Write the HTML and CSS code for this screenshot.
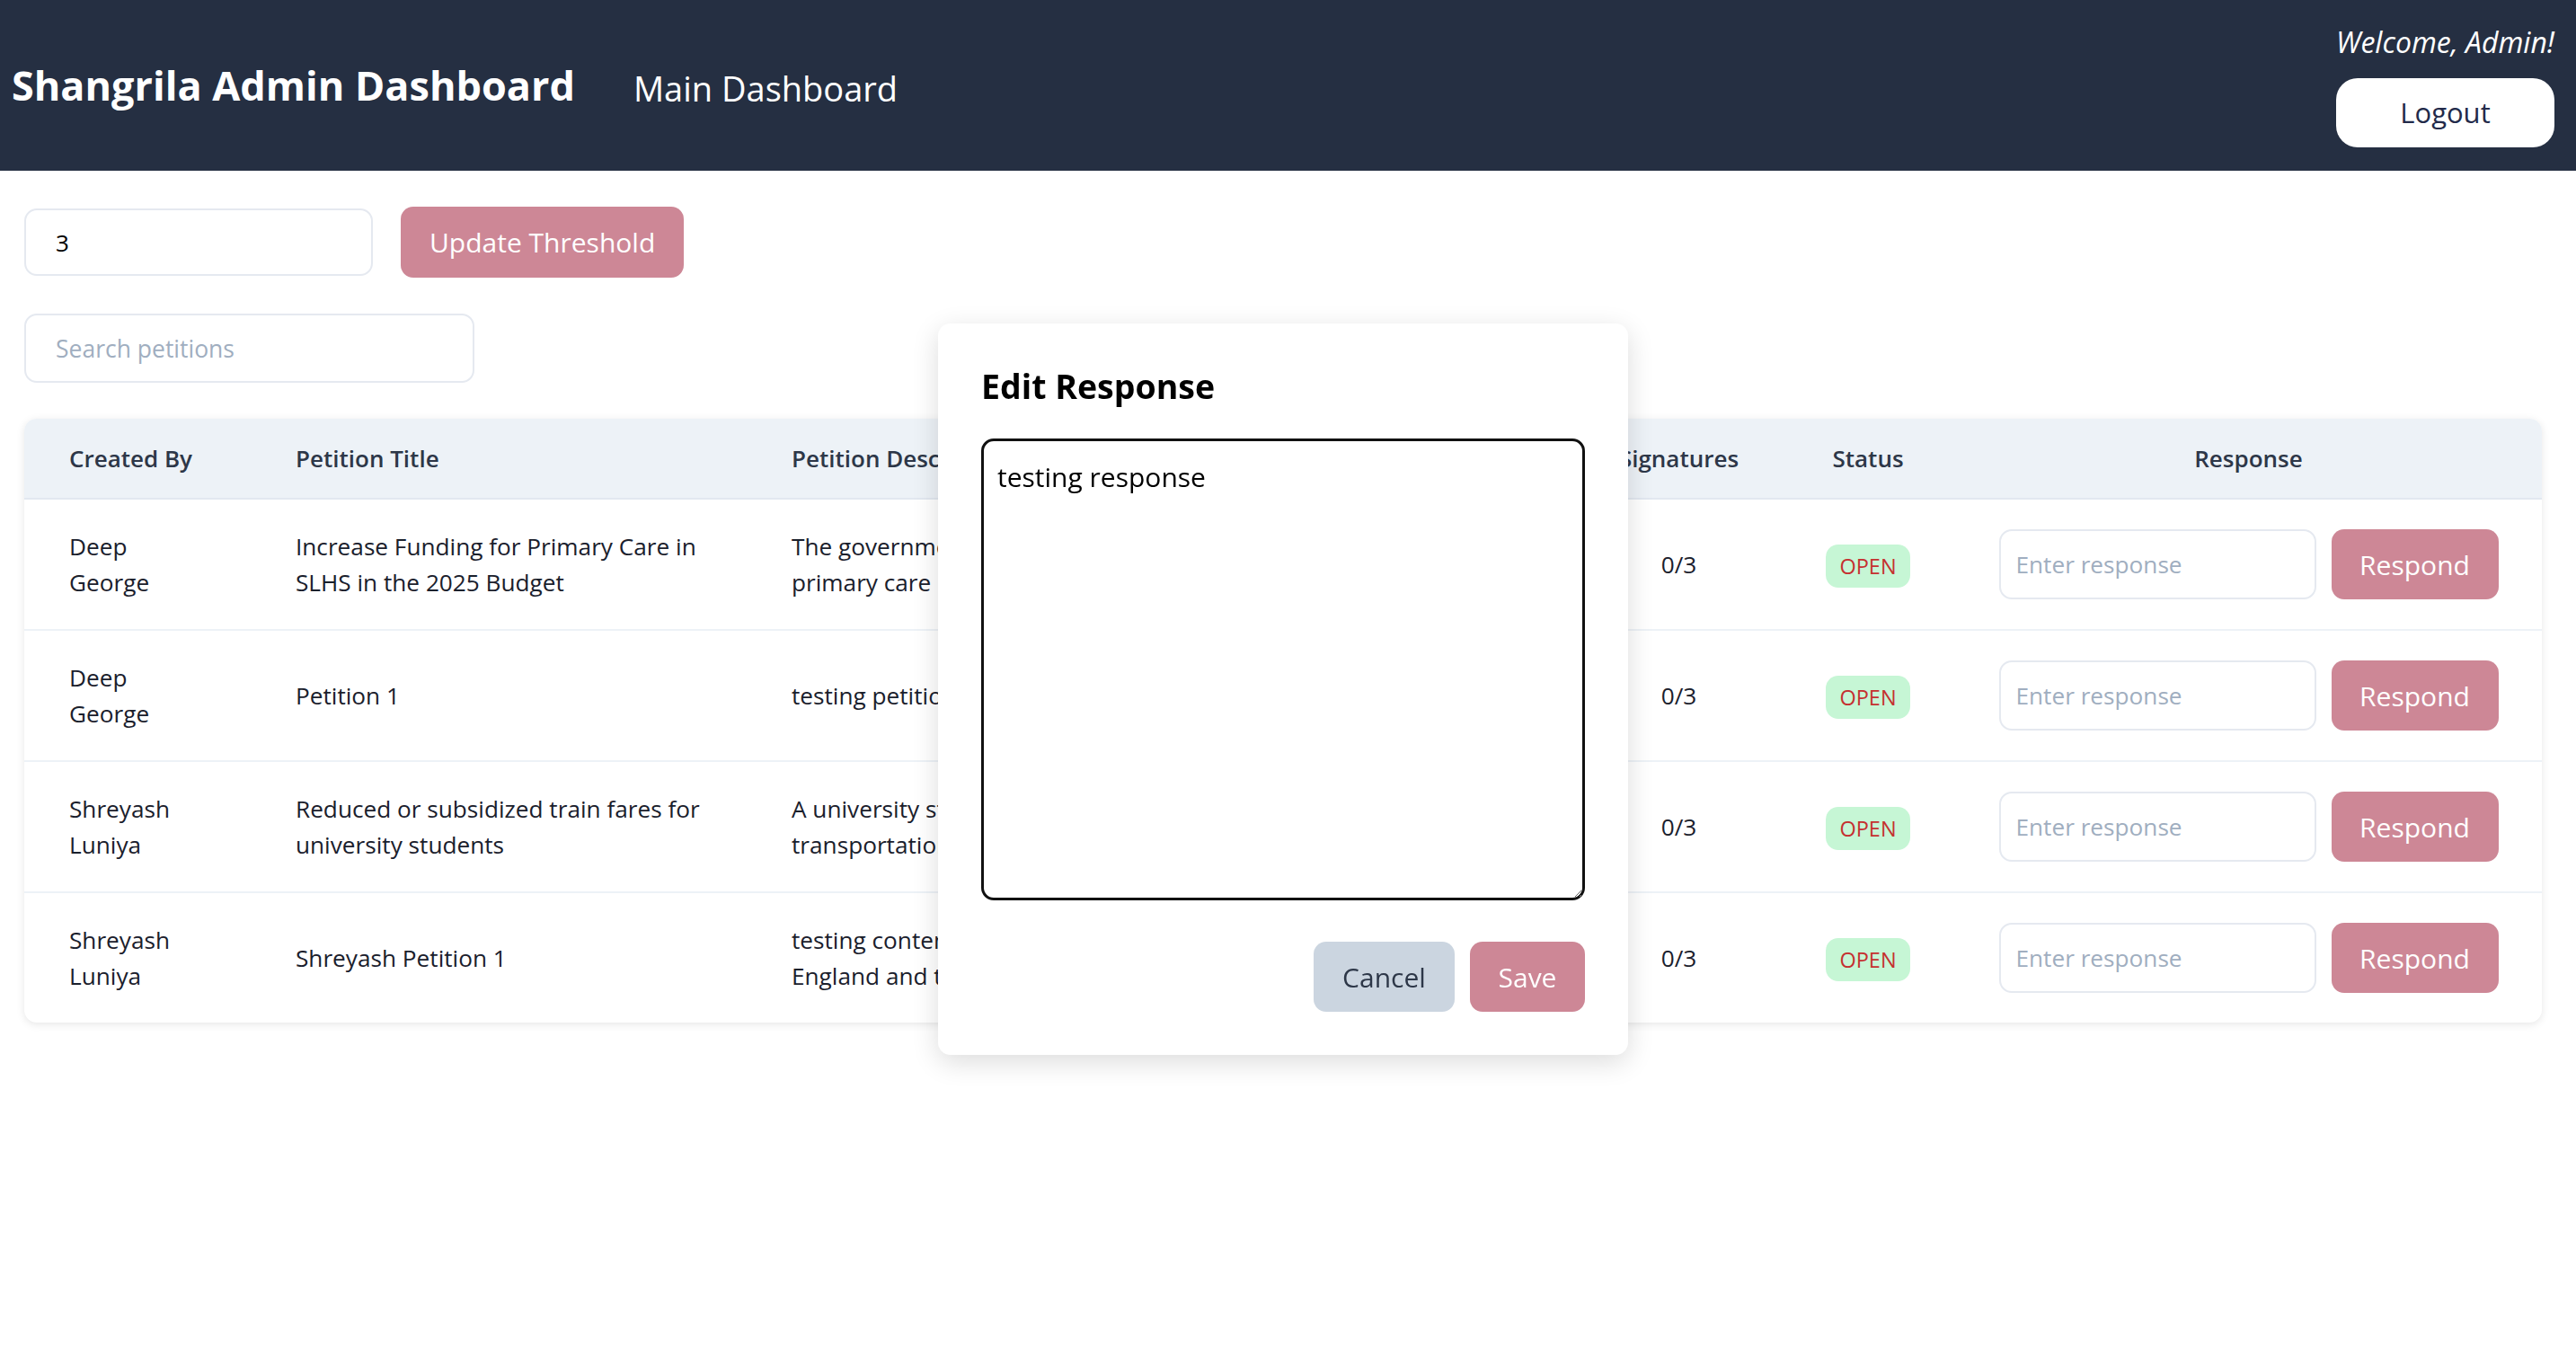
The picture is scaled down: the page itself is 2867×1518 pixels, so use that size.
FILE: index.html
```html
<!DOCTYPE html>
<html lang="en">
<head>
<meta charset="utf-8">
<title>Shangrila Admin Dashboard</title>
<link rel="stylesheet" href="styles.css">
</head>
<body>
<header class="topbar">
  <div class="brand">
    <h1 class="brand-title">Shangrila Admin Dashboard</h1>
    <span class="brand-sub">Main Dashboard</span>
  </div>
  <div class="account">
    <span class="welcome">Welcome, Admin!</span>
    <button class="logout">Logout</button>
  </div>
</header>

<main class="content">
  <div class="threshold-row">
    <input class="field threshold-input" type="text" value="3">
    <button class="btn btn-primary update-btn">Update Threshold</button>
  </div>
  <input class="field search" type="text" placeholder="Search petitions">

  <div class="card">
    <table class="petitions">
      <colgroup>
        <col class="col-by">
        <col class="col-title">
        <col class="col-desc">
        <col class="col-sig">
        <col class="col-status">
        <col class="col-resp">
      </colgroup>
      <thead>
        <tr>
          <th class="first">Created By</th>
          <th>Petition Title</th>
          <th>Petition Description</th>
          <th class="center">Signatures</th>
          <th class="center">Status</th>
          <th class="center">Response</th>
        </tr>
      </thead>
      <tbody>
        <tr>
          <td class="first">Deep George</td>
          <td>Increase Funding for Primary Care in SLHS in the 2025 Budget</td>
          <td class="desc">The government should increase funding for
primary care in SLHS in the 2025 budget.</td>
          <td class="center">0/3</td>
          <td class="center"><span class="badge">OPEN</span></td>
          <td class="center"><div class="respond"><input class="field resp-input" type="text" placeholder="Enter response"><button class="btn btn-primary resp-btn">Respond</button></div></td>
        </tr>
        <tr>
          <td class="first">Deep George</td>
          <td>Petition 1</td>
          <td class="desc">testing petition</td>
          <td class="center">0/3</td>
          <td class="center"><span class="badge">OPEN</span></td>
          <td class="center"><div class="respond"><input class="field resp-input" type="text" placeholder="Enter response"><button class="btn btn-primary resp-btn">Respond</button></div></td>
        </tr>
        <tr>
          <td class="first">Shreyash Luniya</td>
          <td>Reduced or subsidized train fares for university students</td>
          <td class="desc">A university student's guide to affordable
transportation across the region.</td>
          <td class="center">0/3</td>
          <td class="center"><span class="badge">OPEN</span></td>
          <td class="center"><div class="respond"><input class="field resp-input" type="text" placeholder="Enter response"><button class="btn btn-primary resp-btn">Respond</button></div></td>
        </tr>
        <tr>
          <td class="first">Shreyash Luniya</td>
          <td>Shreyash Petition 1</td>
          <td class="desc">testing content for a petition across
England and the UK.</td>
          <td class="center">0/3</td>
          <td class="center"><span class="badge">OPEN</span></td>
          <td class="center"><div class="respond"><input class="field resp-input" type="text" placeholder="Enter response"><button class="btn btn-primary resp-btn">Respond</button></div></td>
        </tr>
      </tbody>
    </table>
  </div>
</main>

<div class="overlay">
  <div class="modal">
    <h2 class="modal-title">Edit Response</h2>
    <textarea class="modal-text">testing response</textarea>
    <div class="modal-actions">
      <button class="btn btn-cancel">Cancel</button>
      <button class="btn btn-primary btn-save">Save</button>
    </div>
  </div>
</div>
</body>
</html>
```

FILE: styles.css
```css
html, body {
  margin: 0;
  padding: 0;
}

body {
  font-family: "Open Sans", "Noto Sans", sans-serif;
  color: #1a202c;
  background: #ffffff;
}

/* ---------- top bar ---------- */
.topbar {
  box-sizing: border-box;
  height: 190px;
  padding: 0 24px 0 13px;
  background: #252f42;
  display: flex;
  align-items: center;
  justify-content: space-between;
}

.brand {
  display: flex;
  align-items: center;
  gap: 65px;
}

.brand-title {
  margin: 0;
  font-size: 45px;
  font-weight: 700;
  line-height: 60px;
  color: #ffffff;
}

.brand-sub {
  font-size: 38px;
  line-height: 50px;
  color: #ffffff;
  padding-top: 6px;
}

.account {
  width: 243px;
  display: flex;
  flex-direction: column;
  gap: 20px;
}

.welcome {
  font-style: italic;
  font-size: 32px;
  line-height: 40px;
  text-align: right;
  color: #ffffff;
}

.logout {
  height: 77px;
  border: none;
  border-radius: 24px;
  background: #ffffff;
  color: #222a4a;
  font-family: inherit;
  font-size: 31px;
}

/* ---------- main ---------- */
.content {
  padding: 40px 38px 40px 27px;
}

.threshold-row {
  display: flex;
  align-items: center;
  gap: 31px;
}

.field {
  box-sizing: border-box;
  border: 2px solid #e5e9f0;
  border-radius: 14px;
  background: #ffffff;
  font-family: inherit;
  font-size: 26px;
  color: #000000;
  padding: 0 33px;
  outline: none;
}

.field::placeholder {
  color: #a0aec0;
}

.threshold-input {
  width: 388px;
  height: 75px;
}

.btn {
  border: none;
  border-radius: 14px;
  font-family: inherit;
  font-size: 30px;
  cursor: pointer;
}

.btn-primary {
  background: #cd8796;
  color: #ffffff;
}

.update-btn {
  height: 79px;
  padding: 0 32px;
}

.search {
  display: block;
  margin-top: 40px;
  width: 501px;
  height: 77px;
  font-size: 26.5px;
}

/* ---------- table card ---------- */
.card {
  margin-top: 40px;
  background: #ffffff;
  border-radius: 14px;
  overflow: hidden;
  box-shadow: 0 2px 10px rgba(0, 0, 0, 0.1);
}

.petitions {
  width: 100%;
  border-collapse: collapse;
  table-layout: fixed;
}

.col-by { width: 254px; }
.col-title { width: 552px; }
.col-desc { width: 922px; }
.col-sig { width: 227px; }
.col-status { width: 194px; }
.col-resp { width: 653px; }

.petitions th {
  background: #edf2f7;
  color: #2d3748;
  font-size: 26px;
  font-weight: 600;
  line-height: 40px;
  text-align: left;
  white-space: nowrap;
  padding: 24px 24px 24px 48px;
  border-bottom: 2px solid #e2e8f0;
}

.petitions td {
  font-size: 26.2px;
  line-height: 40px;
  color: #1a202c;
  vertical-align: middle;
  padding: 32px 24px 32px 48px;
  border-bottom: 2px solid #edf2f7;
}

.petitions tbody tr:last-child td {
  border-bottom: none;
}

.petitions .first {
  padding-left: 50px;
  padding-right: 64px;
}

.petitions .desc {
  white-space: pre-line;
}

.petitions .center {
  text-align: center;
  padding-left: 24px;
  padding-right: 24px;
}

.badge {
  display: inline-block;
  height: 48px;
  line-height: 48px;
  padding: 0 15px;
  margin-top: 4px;
  border-radius: 14px;
  background: #c6f6d5;
  color: #c53030;
  font-size: 23.5px;
  vertical-align: middle;
}

.respond {
  display: flex;
  justify-content: center;
  align-items: center;
  gap: 17px;
}

.resp-input {
  width: 353px;
  height: 78px;
  padding: 0 17px;
  font-size: 26.2px;
}

.resp-btn {
  height: 78px;
  width: 186px;
}

/* ---------- modal ---------- */
.overlay {
  position: fixed;
  inset: 0;
  display: flex;
  align-items: center;
  justify-content: center;
  padding: 16px 11px 0 0;
}

.modal {
  box-sizing: border-box;
  width: 768px;
  padding: 48px;
  background: #ffffff;
  border-radius: 14px;
  box-shadow: 0 8px 30px rgba(0, 0, 0, 0.14);
}

.modal-title {
  margin: 0;
  font-size: 37.5px;
  font-weight: 700;
  line-height: 44px;
  color: #000000;
}

.modal-text {
  display: block;
  box-sizing: border-box;
  width: 100%;
  height: 514px;
  margin-top: 36px;
  padding: 20px 15px;
  border: 3.5px solid #111111;
  border-radius: 14px;
  font-family: inherit;
  font-size: 30px;
  line-height: 40px;
  color: #000000;
  outline: none;
}

.modal-actions {
  display: flex;
  justify-content: flex-end;
  gap: 17px;
  margin-top: 46px;
}

.btn-cancel {
  width: 157px;
  height: 78px;
  background: #cbd5e0;
  color: #2d3748;
}

.btn-save {
  width: 128px;
  height: 78px;
}
```
